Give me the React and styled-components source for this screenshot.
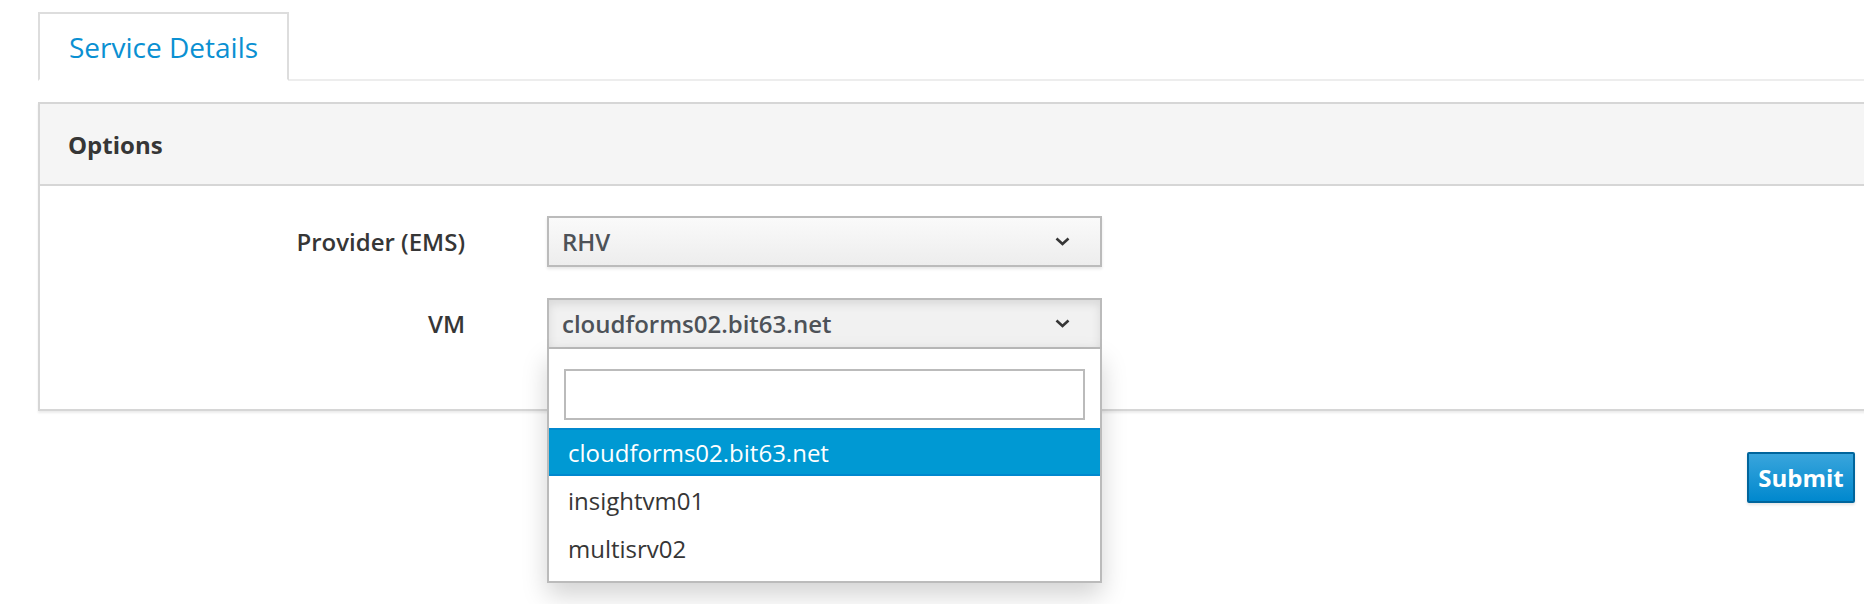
import styled, { createGlobalStyle, css } from 'styled-components';

const GlobalStyle = createGlobalStyle`
    html, body {
        margin: 0;
        height: 100%;
        overflow: hidden;
        background: #fff;
        font-family: "Open Sans", "Liberation Sans", sans-serif;
    }
    * { box-sizing: border-box; }
`;

const Viewport = styled.div`
    width: 100%;
    height: 604px;
    overflow: hidden;
`;

const Page = styled.div`
    width: 1872px;
    padding: 12px 0 0 38px;
`;

const TabBar = styled.div`
    display: flex;
    border-bottom: 2px solid #ededed;
`;

const Tab = styled.div`
    display: flex;
    align-items: center;
    height: 69px;
    margin-bottom: -2px;
    padding: 0 29px;
    background: #fff;
    border: 2px solid #dddddd;
    border-bottom-color: transparent;
    font-size: 28px;
    color: #0a90d2;
`;

const Panel = styled.section`
    margin-top: 21px;
    border: 2px solid #d6d6d6;
    box-shadow: 0 2px 2px rgba(3, 3, 3, 0.08);
`;

const PanelHeading = styled.div`
    display: flex;
    align-items: center;
    height: 82px;
    padding: 0 28px;
    background: #f5f5f5;
    border-bottom: 2px solid #d6d6d6;
    font-size: 24px;
    font-weight: 700;
    color: #363636;
`;

const PanelBody = styled.div`
    display: flex;
    flex-direction: column;
    gap: 31px;
    padding: 30px 0 60px;
`;

const FormRow = styled.div`
    display: grid;
    grid-template-columns: 425px 555px;
    column-gap: 82px;
    align-items: center;
`;

const Label = styled.label`
    text-align: right;
    font-size: 24px;
    font-weight: 600;
    color: #363636;
`;

const SelectWrap = styled.div`
    position: relative;
`;

const SelectButton = styled.div`
    display: flex;
    align-items: center;
    justify-content: space-between;
    height: 51px;
    padding: 0 30px 0 13px;
    border: 2px solid #bbbbbb;
    background: linear-gradient(to bottom, #fafafa, #ededed);
    box-shadow: 0 2px 3px rgba(3, 3, 3, 0.1);
    font-size: 24px;
    font-weight: 600;
    color: #4d5258;

    ${props => props.$open && css`
        background: #f1f1f1;
        box-shadow: inset 0 4px 10px rgba(3, 3, 3, 0.1);
    `}
`;

const Menu = styled.div`
    position: absolute;
    top: 100%;
    left: 0;
    right: 0;
    z-index: 10;
    padding: 20px 0 9px;
    background: #fff;
    border: 2px solid #bbbbbb;
    border-top: none;
    box-shadow: 0 12px 24px rgba(0, 0, 0, 0.175);
`;

const SearchBox = styled.input`
    display: block;
    width: calc(100% - 30px);
    height: 51px;
    margin: 0 15px 8px;
    border: 2px solid #bbbbbb;
    border-radius: 0;
    outline: none;
    font: inherit;
`;

const Option = styled.div`
    display: flex;
    align-items: center;
    height: 48px;
    padding: 0 19px;
    font-size: 24px;
    color: #363636;

    ${props => props.$active && css`
        background: #0099d3;
        border-top: 2px solid #0088ce;
        border-bottom: 2px solid #0088ce;
        color: #fff;
    `}
`;

const Footer = styled.div`
    display: flex;
    justify-content: flex-end;
    margin-top: 41px;
    padding-right: 17px;
`;

const SubmitButton = styled.button`
    width: 108px;
    height: 51px;
    padding: 0;
    border: 2px solid #00659c;
    border-radius: 2px;
    background: linear-gradient(to bottom, #39a5dc, #0088ce);
    box-shadow: 0 2px 3px rgba(3, 3, 3, 0.1);
    font-family: inherit;
    font-size: 24px;
    font-weight: 700;
    color: #fff;
`;

const Chevron = () => (
    <svg width="15" height="9" viewBox="0 0 15 9">
        <path d="M1.5 1.5 L7.5 7 L13.5 1.5" fill="none" stroke="#363636" strokeWidth="2.6" />
    </svg>
);

const vms = ['cloudforms02.bit63.net', 'insightvm01', 'multisrv02'];

const App = () => {
    return (
        <Viewport>
            <GlobalStyle />
            <Page>
                <TabBar>
                    <Tab>Service Details</Tab>
                </TabBar>

                <Panel>
                    <PanelHeading>Options</PanelHeading>
                    <PanelBody>
                        <FormRow>
                            <Label>Provider (EMS)</Label>
                            <SelectWrap>
                                <SelectButton>
                                    <span>RHV</span>
                                    <Chevron />
                                </SelectButton>
                            </SelectWrap>
                        </FormRow>

                        <FormRow>
                            <Label>VM</Label>
                            <SelectWrap>
                                <SelectButton $open>
                                    <span>cloudforms02.bit63.net</span>
                                    <Chevron />
                                </SelectButton>
                                <Menu>
                                    <SearchBox type="text" />
                                    {vms.map((vm, index) => (
                                        <Option key={vm} $active={index === 0}>
                                            {vm}
                                        </Option>
                                    ))}
                                </Menu>
                            </SelectWrap>
                        </FormRow>
                    </PanelBody>
                </Panel>

                <Footer>
                    <SubmitButton>Submit</SubmitButton>
                </Footer>
            </Page>
        </Viewport>
    );
};

export default App;
